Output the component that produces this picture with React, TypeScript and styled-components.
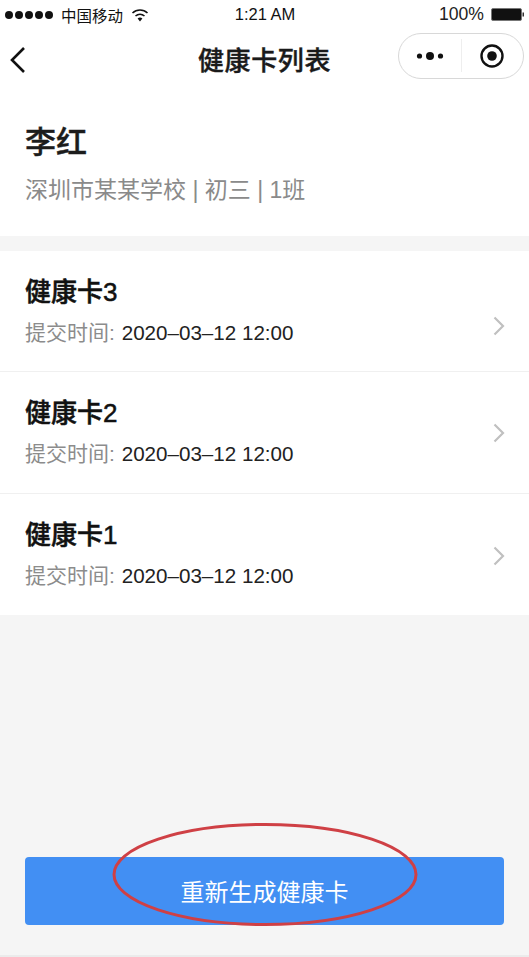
import React from "react";
import styled, { createGlobalStyle } from "styled-components";

const Global = createGlobalStyle`
  html, body { margin: 0; padding: 0; background: #f5f5f5; }
  body { font-family: "Liberation Sans", "Noto Sans CJK SC", sans-serif; }
  * { box-sizing: border-box; }
`;
const Page = styled.div`
  width: 529px; height: 957px; position: relative; display: flex; flex-direction: column;
  background: #f5f5f5; overflow: hidden; border-bottom: 2px solid #ebebeb;
`;
const Header = styled.div`background: #fff; height: 236px; display: flex; flex-direction: column;`;
const StatusBar = styled.div`
  height: 29px; display: grid; grid-template-columns: 1fr auto 1fr; align-items: center;
  padding: 0 4px 0 5px; font-size: 16.5px; color: #111;
`;
const StatusLeft = styled.div`display: flex; align-items: center; gap: 8px; font-size: 15.5px;`;
const StatusRight = styled.div`display: flex; align-items: center; justify-content: flex-end; gap: 7px; color: #222;`;
const Battery = styled.span`font-size: 17.6px;`;
const Dots = styled.div`display: flex; gap: 2px;`;
const Dot = styled.span`width: 8px; height: 8px; border-radius: 50%; background: #111;`;
const NavBar = styled.div`height: 58px; display: grid; grid-template-columns: 1fr auto 1fr; align-items: center; padding: 0 5px;`;
const BackIcon = styled.svg`margin: 3px 0 0 4px;`;
const Title = styled.div`
  font-size: 26px; font-weight: 500; color: #1a1a1a; margin-top: 1px; letter-spacing: 0.6px;
  -webkit-text-stroke: 0.4px #1a1a1a;
`;
const Capsule = styled.div`
  justify-self: end; width: 126px; height: 46px; border: 1px solid #d8d8d8; border-radius: 23px;
  display: grid; grid-template-columns: 1fr 1px 1fr; align-items: center; justify-items: center;
  margin-top: -5px;
`;
const Divider = styled.span`width: 1px; height: 33px; background: #eee;`;
const Person = styled.div`padding: 36px 25px 0;`;
const Name = styled.div`
  font-size: 31px; line-height: 40px; font-weight: 500; color: #1c1c1c;
  -webkit-text-stroke: 0.4px #1c1c1c;
`;
const School = styled.div`font-size: 23px; line-height: 30px; color: #8a8a8a; margin-top: 12px; white-space: nowrap;`;
const List = styled.div`margin-top: 15px; background: #fff;`;
const Row = styled.div`
  height: 121.3px; padding: 22px 25px 0; position: relative; display: flex; flex-direction: column;
  border-bottom: 1px solid #f0f0f0;
  &:last-child { border-bottom: 0; }
`;
const RowTitle = styled.div`
  font-size: 26px; line-height: 38px; font-weight: 500; color: #111;
  -webkit-text-stroke: 0.5px #111;
`;
const RowMeta = styled.div`font-size: 21px; line-height: 28px; color: #8c8c8c; margin-top: 8px; white-space: nowrap;`;
const Time = styled.span`color: #222; font-size: 20.6px; margin-left: 1px;`;
const Chevron = styled.svg<{ $top: number }>`position: absolute; right: 24px; top: ${(p) => p.$top}px;`;
const Footer = styled.div`margin-top: auto; padding: 0 25px 30px;`;
const Button = styled.button`
  width: 479px; height: 68px; border: 0; border-radius: 4px; background: #428ff3; color: #fff;
  font: 400 24px "Liberation Sans", "Noto Sans CJK SC", sans-serif; padding: 0 0 2px;
`;
const Ellipse = styled.svg`position: absolute; left: 110px; top: 820px; pointer-events: none;`;

const records = [
  { name: "健康卡3", chevronTop: 65 },
  { name: "健康卡2", chevronTop: 51 },
  { name: "健康卡1", chevronTop: 52 },
];

export default function App() {
  return (
    <Page>
      <Global />
      <Header>
        <StatusBar>
          <StatusLeft>
            <Dots>{[0, 1, 2, 3, 4].map((i) => <Dot key={i} />)}</Dots>
            <span>中国移动</span>
            <svg width="18" height="14" viewBox="0 0 18 14">
              <path d="M1.5 5 A11 11 0 0 1 16.5 5" fill="none" stroke="#111" strokeWidth="1.6" />
              <path d="M4.5 8 A7 7 0 0 1 13.5 8" fill="none" stroke="#111" strokeWidth="1.6" />
              <path d="M9 13.5 L6.6 10.6 A3.5 3.5 0 0 1 11.4 10.6 Z" fill="#111" />
            </svg>
          </StatusLeft>
          <span>1:21 AM</span>
          <StatusRight>
            <Battery>100%</Battery>
            <svg width="34" height="13" viewBox="0 0 34 13">
              <rect x="0.5" y="0.5" width="30" height="12" rx="1.5" fill="#111" stroke="#777" />
              <rect x="31.5" y="4.5" width="1.5" height="4" fill="#333" />
            </svg>
          </StatusRight>
        </StatusBar>
        <NavBar>
          <BackIcon width="18" height="28" viewBox="0 0 18 28">
            <path d="M15 2 L3 14 L15 26" fill="none" stroke="#111" strokeWidth="2.6" />
          </BackIcon>
          <Title>健康卡列表</Title>
          <Capsule>
            <svg width="28" height="10" viewBox="0 0 28 10">
              <circle cx="3.5" cy="5" r="2.6" fill="#111" />
              <circle cx="14" cy="5" r="4" fill="#111" />
              <circle cx="24.5" cy="5" r="2.6" fill="#111" />
            </svg>
            <Divider />
            <svg width="24" height="24" viewBox="0 0 24 24">
              <circle cx="12" cy="12" r="10.5" fill="none" stroke="#111" strokeWidth="2.4" />
              <circle cx="12" cy="12" r="4.8" fill="#111" />
            </svg>
          </Capsule>
        </NavBar>
        <Person>
          <Name>李红</Name>
          <School>深圳市某某学校 | 初三 | 1班</School>
        </Person>
      </Header>
      <List>
        {records.map((r) => (
          <Row key={r.name}>
            <RowTitle>{r.name}</RowTitle>
            <RowMeta>提交时间: <Time>2020–03–12 12:00</Time></RowMeta>
            <Chevron $top={r.chevronTop} width="12" height="20" viewBox="0 0 12 20">
              <path d="M1.5 1.5 L10 10 L1.5 18.5" fill="none" stroke="#c0c0c0" strokeWidth="2.2" />
            </Chevron>
          </Row>
        ))}
      </List>
      <Footer><Button>重新生成健康卡</Button></Footer>
      <Ellipse width="310" height="108" viewBox="0 0 310 108">
        <ellipse cx="155" cy="54.5" rx="151" ry="50" fill="none" stroke="#cf4045" strokeWidth="3" />
      </Ellipse>
    </Page>
  );
}
